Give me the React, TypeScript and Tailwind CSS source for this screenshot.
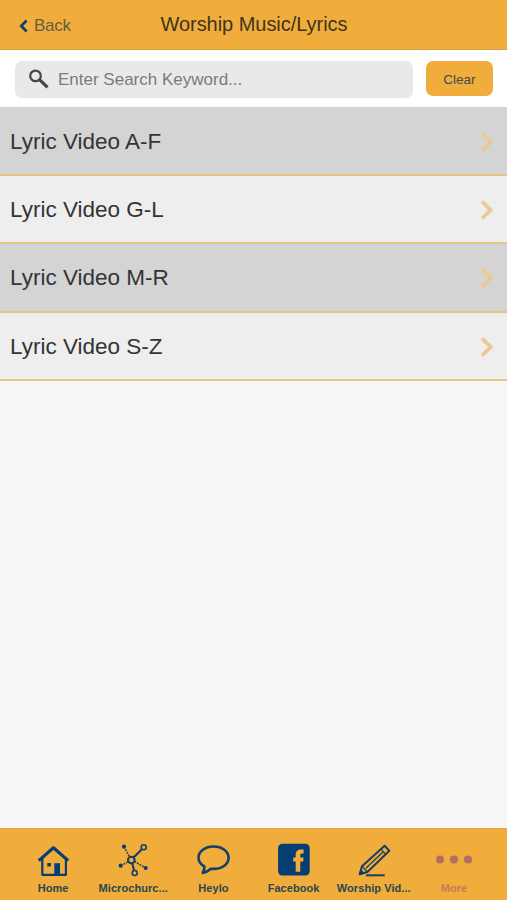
import { useState } from "react";
import type { ReactNode } from "react";

const rows = ["Lyric Video A-F", "Lyric Video G-L", "Lyric Video M-R", "Lyric Video S-Z"];

const HomeIcon = () => (
    <svg width="36" height="36" viewBox="0 0 36 36" fill="none" stroke="#063d72" strokeLinejoin="round">
        <path d="M3.8 18.6 18.4 5.8 33.2 18.6" strokeWidth="3.2" />
        <path d="M7.3 16v16.8h23.6V16" strokeWidth="2.2" />
        <path d="M12.3 21h3.6v3.6h-3.6zM19.3 21.2H25v11.6h-5.7z" fill="#063d72" stroke="none" />
    </svg>
);

const NetworkIcon = () => (
    <svg width="36" height="36" viewBox="0 0 36 36" fill="none" stroke="#173f60">
        <path d="M18.6 15.4 26.9 7.2M17.1 21l2 7.4" strokeWidth="2.1" />
        <path d="m9 4.7 5.6 10.3M5.7 23.7l7.5-4M19.3 19.3 30.7 26" strokeWidth="1.4" strokeDasharray="2 1" />
        <circle cx="16.3" cy="18" r="3.3" strokeWidth="2.1" />
        <circle cx="28.7" cy="5.3" r="2.5" strokeWidth="1.6" />
        <circle cx="19.7" cy="31" r="2.5" strokeWidth="1.6" />
        <g fill="#063d72" stroke="none">
            <circle cx="9" cy="4.7" r="2.1" />
            <circle cx="5.7" cy="23.7" r="2.1" />
            <circle cx="30.7" cy="26" r="2.1" />
        </g>
    </svg>
);

const ChatIcon = () => (
    <svg width="36" height="36" viewBox="0 0 36 36" fill="none" stroke="#12406a" strokeWidth="2.6" strokeLinejoin="round">
        <path d="M9.4 24.3C5.6 22.200 3.500 19.300 3.500 15.700 3.500 9.300 10 4.500 18.600 4.500s15 4.800 15 11.200-6.400 11.200-15 11.200c-1 0-1.900-.1-2.800-.2-2.200 2.100-4.700 3.600-8 4.200 1.100-1.900 1.800-3.900 1.600-6.600z" />
    </svg>
);

const FacebookIcon = () => (
    <svg width="36" height="36" viewBox="0 0 36 36">
        <rect x="2.100" y="1.700" width="31.600" height="31.800" rx="4.200" fill="#063d72" />
        <path d="M19.700 29.800V19.500h-2.500v-4h2.500v-2.300c0-3.800 1.900-5.600 5.300-5.600h2.600v4h-1.500c-1.400 0-1.800.7-1.800 2v1.900h3.300l-.4 4h-2.900v10.300z" fill="#f0ad3c" />
    </svg>
);

const PencilIcon = () => (
    <svg width="36" height="36" viewBox="0 0 36 36" fill="none" stroke="#173f60" strokeLinejoin="round">
        <path d="M3.600 32.200 6 24.200 28.600 3.800l4.700 4.900L11.400 30z" strokeWidth="2" />
        <path d="m9.800 26.200 17.200-16.200M24.900 7.200l4.800 5M6 24.200l5.400 5.800" strokeWidth="1.200" />
        <path d="m2.800 33 1.900-6 4.200 4.400z" fill="#063d72" stroke="none" />
        <path d="M10 33.300h18.700" strokeWidth="2" />
    </svg>
);

const MoreIcon = () => (
    <svg width="36" height="36" viewBox="0 0 36 36" fill="#b46e60">
        <circle cx="4" cy="17.500" r="4.100" />
        <circle cx="18" cy="17.500" r="4.100" />
        <circle cx="32" cy="17.500" r="4.100" />
    </svg>
);

const tabs: { label: string; icon: ReactNode; muted?: boolean }[] = [
    { label: "Home", icon: <HomeIcon /> },
    { label: "Microchurc...", icon: <NetworkIcon /> },
    { label: "Heylo", icon: <ChatIcon /> },
    { label: "Facebook", icon: <FacebookIcon /> },
    { label: "Worship Vid...", icon: <PencilIcon /> },
    { label: "More", icon: <MoreIcon />, muted: true },
];

const App = () => {
    const [keyword, setKeyword] = useState("");

    return (
        <div className="flex h-[900px] w-[507px] flex-col overflow-hidden bg-[#f6f6f6] font-['Liberation_Sans',Arial,sans-serif]">
            <header className="grid h-[50px] shrink-0 grid-cols-[1fr_auto_1fr] border-b border-[#d9a040] bg-[#f0ad3c]">
                <button className="flex items-center gap-[6px] pt-[2px] pl-[19px] text-[17px] tracking-[-0.3px] text-[#665d42]">
                    <svg width="9" height="14" viewBox="0 0 9 14" fill="none" stroke="#123f68" strokeWidth="2.6">
                        <path d="M7.600 1.500 2.200 7l5.400 5.500" />
                    </svg>
                    Back
                </button>
                <h1 className="pt-[9px] pl-px text-[20px] leading-[30px] tracking-[-0.04px] text-[#40341f]">Worship Music/Lyrics</h1>
                <span />
            </header>

            <div className="flex h-[57px] shrink-0 items-start bg-white pt-[11px] pr-[14px] pl-[15px]">
                <label className="flex h-[37px] w-[398px] items-center rounded-[7px] bg-[#e9e9e9] pl-[13px]">
                    <svg width="22" height="22" viewBox="0 0 22 22" fill="none" stroke="#45454c">
                        <circle cx="7.500" cy="6.900" r="5.300" strokeWidth="2.200" />
                        <path d="m11.500 10.700 8 7.700" strokeWidth="3.200" />
                    </svg>
                    <input
                        type="text"
                        placeholder="Enter Search Keyword..."
                        className="ml-[8px] w-[330px] bg-transparent text-[17px] text-[#444] outline-none placeholder:text-[#7b7b7b]"
                        value={keyword}
                        onChange={(e) => setKeyword(e.target.value)}
                    />
                </label>
                <button
                    onClick={() => setKeyword("")}
                    className="ml-auto h-[35px] w-[67px] rounded-[7px] bg-[#f0ad3c] pt-[3px] text-[13.5px] text-[#3d4c4c]"
                >
                    Clear
                </button>
            </div>

            <ul className="flex-1 pt-[0.4px]">
                {rows.map((row) => (
                    <li
                        key={row}
                        className="flex h-[68.4px] items-center justify-between border-b-2 border-[#e9c382] pt-[2px] pr-[13px] pl-[10px] odd:bg-[#d4d4d4] even:bg-[#eee]"
                    >
                        <span className="text-[22.5px] text-[#343434]">{row}</span>
                        <svg width="14" height="20" viewBox="0 0 14 20" fill="none" stroke="#ebc98f" strokeWidth="3.8">
                            <path d="m2 1.500 8.700 8.500L2 18.500" />
                        </svg>
                    </li>
                ))}
            </ul>

            <nav className="flex h-[72px] shrink-0 border-t border-[#dfa84c] bg-[#f0ad3c] px-[13px]">
                {tabs.map((tab) => (
                    <button key={tab.label} className="flex flex-1 flex-col items-center pt-[13px]">
                        {tab.icon}
                        <span
                            className={
                                tab.muted
                                    ? "mt-[2px] text-[11px] leading-[16px] font-bold text-[#c27c57]"
                                    : "mt-[2px] text-[11px] leading-[16px] font-bold tracking-[0.07px] whitespace-nowrap text-[#2a4650]"
                            }
                        >
                            {tab.label}
                        </span>
                    </button>
                ))}
            </nav>
        </div>
    );
};

export default App;
